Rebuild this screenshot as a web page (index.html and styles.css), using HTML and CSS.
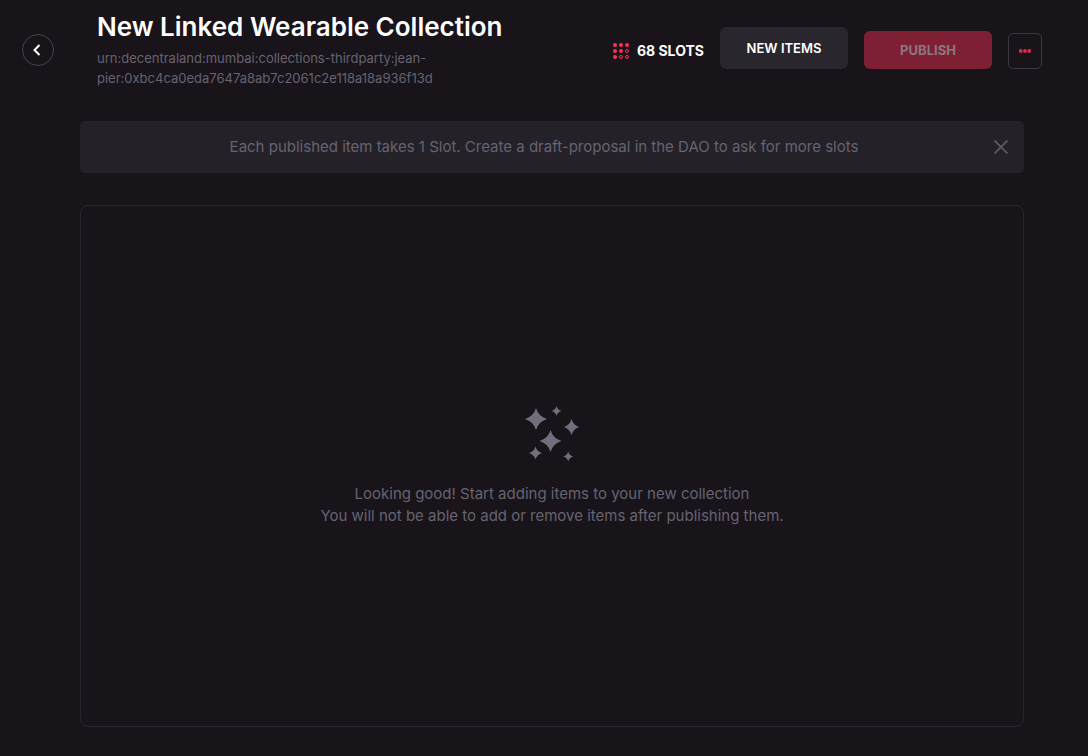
FILE: index.html
```html
<!DOCTYPE html>
<html lang="en">
<head>
<meta charset="utf-8">
<meta name="viewport" content="width=device-width, initial-scale=1">
<title>New Linked Wearable Collection</title>
<link rel="stylesheet" href="styles.css">
</head>
<body>
<header class="header">
  <button class="back" type="button" aria-label="Back">
    <svg width="12" height="14" viewBox="0 0 12 14" aria-hidden="true"><path d="M7.500 2 2.500 7l5 5" fill="none" stroke="currentColor" stroke-width="2"/></svg>
  </button>
  <div class="heading">
    <h1 class="title">New Linked Wearable Collection</h1>
    <p class="urn">urn:decentraland:mumbai:collections-thirdparty:jean-pier:0xbc4ca0eda7647a8ab7c2061c2e118a18a936f13d</p>
  </div>
  <div class="actions">
    <div class="slots">
      <svg class="slots-icon" width="16" height="16" viewBox="0 0 16 16" aria-hidden="true">
        <g fill="currentColor"><circle cx="2" cy="2" r="2"/><circle cx="8" cy="2" r="2"/><circle cx="14" cy="2" r="2"/><circle cx="2" cy="8" r="2"/><circle cx="8" cy="8" r="2"/><circle cx="2" cy="14" r="2"/></g>
        <g fill="none" stroke="currentColor"><circle cx="14" cy="8" r="1.5"/><circle cx="8" cy="14" r="1.5"/><circle cx="14" cy="14" r="1.5"/></g>
      </svg>
      <span>68 SLOTS</span>
    </div>
    <button class="button button-secondary" type="button">NEW ITEMS</button>
    <button class="button button-primary" type="button" disabled>PUBLISH</button>
    <button class="more" type="button" aria-label="More options">
      <svg width="14" height="4" viewBox="0 0 14 4" fill="currentColor" aria-hidden="true"><circle cx="2.7" cy="2" r="1.9"/><circle cx="7" cy="2" r="1.9"/><circle cx="11.3" cy="2" r="1.9"/></svg>
    </button>
  </div>
</header>
<main class="content">
  <section class="notice">
    <p class="notice-text">Each published item takes 1 Slot. Create a draft-proposal in the DAO to ask for more slots</p>
    <button class="close" type="button" aria-label="Close">
      <svg width="14" height="14" viewBox="0 0 14 14" aria-hidden="true"><path d="M.5.5l13 13M13.5.5l-13 13" fill="none" stroke="currentColor" stroke-width="1.8"/></svg>
    </button>
  </section>
  <section class="empty">
    <svg class="sparkles" width="54" height="56" viewBox="0 0 54 56" fill="currentColor" aria-hidden="true">
      <path d="M11 2Q13.500 10.500 22 13Q13.500 15.500 11 24Q8.500 15.500 0 13Q8.500 10.500 11 2Z"/>
      <path d="M31.500 0Q32.500 4 36.500 5Q32.500 6 31.500 10Q30.500 6 26.500 5Q30.500 4 31.500 0Z"/>
      <path d="M46.500 13Q48.300 19.200 54 21Q48.300 22.800 46.500 29Q44.700 22.800 39 21Q44.700 19.200 46.500 13Z"/>
      <path d="M25.500 24Q28 32.500 36.500 35Q28 37.500 25.500 46Q23 37.500 14.500 35Q23 32.500 25.500 24Z"/>
      <path d="M10.500 40.500Q12 45.500 17 47Q12 48.500 10.500 53.500Q9 48.500 4 47Q9 45.500 10.500 40.500Z"/>
      <path d="M43.200 45.500Q44.200 49.500 48.200 50.500Q44.200 51.500 43.200 55.500Q42.200 51.500 38.200 50.500Q42.200 49.500 43.200 45.500Z"/>
    </svg>
    <p class="empty-text">Looking good! Start adding items to your new collection<br>You will not be able to add or remove items after publishing them.</p>
  </section>
</main>
</body>
</html>
```
FILE: styles.css
```css
* {
  box-sizing: border-box;
}

body {
  display: flex;
  flex-direction: column;
  min-height: 100vh;
  margin: 0;
  background: #18141a;
  color: #fff;
  font-family: Inter, "Liberation Sans", sans-serif;
  font-size: 15px;
}

h1,
p {
  margin: 0;
}

button {
  display: flex;
  align-items: center;
  justify-content: center;
  padding: 0;
  border: 0;
  background: none;
  color: inherit;
  font: inherit;
}

.header {
  display: flex;
  align-items: center;
  padding: 8px 46px 0 22px;
}

.back {
  flex: none;
  width: 32px;
  height: 32px;
  margin: 4px 43px 0 0;
  border: 1px solid #47434b;
  border-radius: 50%;
}

.heading {
  flex: 0 1 440px;
  min-width: 0;
}

.title {
  margin-bottom: 2px;
  font-size: 26px;
  font-weight: 600;
  line-height: 38px;
}

.urn {
  color: #676370;
  font-size: 13px;
  line-height: 20px;
}

.actions {
  display: flex;
  align-items: flex-end;
  gap: 16px;
  margin-left: auto;
}

.slots {
  display: flex;
  align-items: center;
  gap: 8px;
  font-size: 14px;
  font-weight: 700;
  line-height: 36px;
  white-space: nowrap;
}

.slots-icon {
  color: #ff2d55;
}

.button {
  width: 128px;
  border-radius: 6px;
  font-size: 13px;
  font-weight: 600;
}

.button-secondary {
  height: 42px;
  background: #29262d;
}

.button-primary {
  height: 38px;
  background: #7f1f33;
  color: #8b7880;
  font-weight: 700;
}

.more {
  width: 34px;
  height: 36px;
  border: 1px solid #3b3740;
  border-radius: 5px;
  color: #e02a4e;
}

.content {
  display: flex;
  flex: 1;
  flex-direction: column;
  gap: 32px;
  padding: 33px 64px 29px 80px;
}

.notice {
  display: flex;
  align-items: center;
  padding: 15px;
  border-radius: 5px;
  background: #242129;
}

.notice-text {
  flex: 1;
  color: #676370;
  line-height: 22px;
  text-align: center;
}

.close {
  width: 16px;
  height: 16px;
  color: #5d5b5e;
}

.empty {
  display: flex;
  flex: 1;
  flex-direction: column;
  align-items: center;
  justify-content: center;
  gap: 21px;
  border: 1px solid #29252c;
  border-radius: 8px;
}

.sparkles {
  color: #736e7d;
}

.empty-text {
  color: #676370;
  line-height: 22px;
  text-align: center;
}
```
